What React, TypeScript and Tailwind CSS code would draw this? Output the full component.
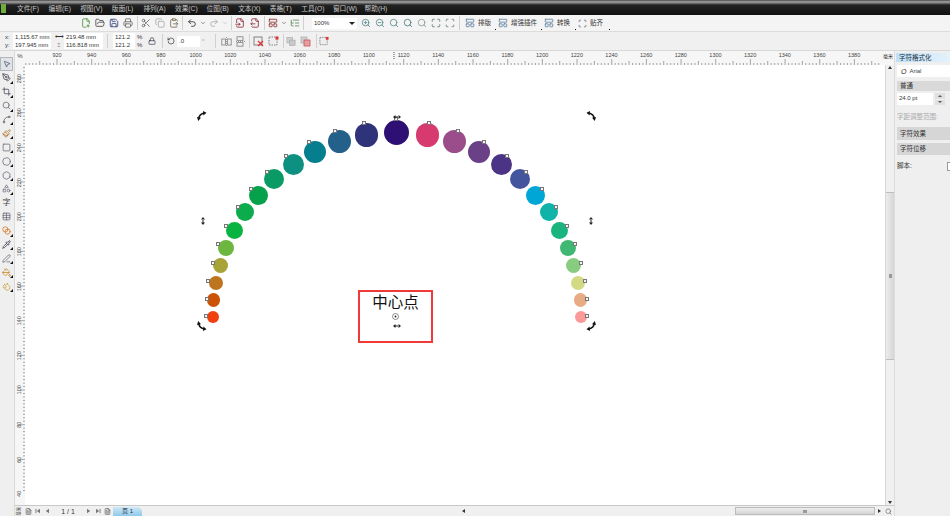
import React from "react";
import {
  FilePlus2, FolderOpen, Save, Printer, Scissors, Copy, ClipboardPaste, Undo2, Redo2, FileInput, FileOutput,
  LayoutPanelTop, ListTree, ZoomIn, ZoomOut, Search, Maximize, Scan, RotateCcw, Lock, MousePointer2, PenTool,
  Crop, Spline, Paintbrush, Square, Circle, Hexagon, Shapes, Table, Blend, Pipette, PenLine, PaintBucket, Droplets,
  ChevronDown, FileText,
} from "lucide-react";

const FONT = "font-['Liberation_Sans','Noto_Sans_CJK_SC',sans-serif]";

type Dot = [number, number, number, string, number, number];
const dots: Dot[] = [
  [212.7, 316.7, 6, "#f04010", 206, 316], [213.3, 300, 6.7, "#cc5206", 206.7, 299], [215.7, 282.7, 7, "#bd7520", 208.3, 281.3],
  [220, 265, 7.5, "#a8a336", 212.7, 263], [226, 247.7, 8, "#6db63f", 218.3, 244.3], [234.3, 230, 8.5, "#09b341", 226.3, 226],
  [245, 212.3, 9, "#0cab4c", 237.7, 207], [258.3, 195.3, 9.5, "#06a24b", 251, 189], [274.3, 179.3, 10, "#0a9a66", 267.3, 171.7],
  [293, 164.7, 10.5, "#0e9081", 286.3, 155.7], [314.7, 152, 11, "#057e8e", 309, 141.7], [339.3, 141.7, 11.3, "#25608a", 335, 130.7],
  [366.7, 135, 11.8, "#2f3379", 364, 122.7], [396.7, 132.3, 12.3, "#2e0f73", 396, 119.3], [427.3, 135, 11.8, "#d63a6e", 429, 122.7],
  [454.7, 141.7, 11.4, "#9a4d8a", 458, 130.7], [479.3, 152, 11, "#6a4087", 484, 141.7], [501, 164.7, 10.5, "#4b3486", 507, 155.7],
  [519.7, 179.3, 10, "#45559d", 526, 171.7], [535.7, 195.3, 9.5, "#00a6d6", 542.3, 189], [548.7, 212.3, 9, "#10b3a8", 555.7, 207],
  [559.3, 230, 8.5, "#1ab57f", 567, 226], [567.7, 247.7, 8, "#40b873", 575, 244.3], [573.7, 265.3, 7.5, "#88cc80", 580.7, 263],
  [578, 282.7, 7, "#d3da85", 585, 281.3], [580.3, 300, 6.7, "#e8ac85", 586.7, 299], [581.3, 316.7, 6, "#fb9a98", 587, 316],
];

const menus = ["文件(F)", "编辑(E)", "视图(V)", "版面(L)", "排列(A)", "效果(C)", "位图(B)", "文本(X)", "表格(T)", "工具(O)", "窗口(W)", "帮助(H)"];
const hLabels = Array.from({ length: 24 }, (_, i) => 920 + i * 20);
const vLabels = Array.from({ length: 13 }, (_, i) => 280 - i * 20);

function Sep() {
  return <div className="mx-[2px] h-[14px] w-px shrink-0 bg-[#d0d0d0]" />;
}

function Gap({ w }: { w: string }) {
  return <div className={`shrink-0 ${w}`} />;
}

function Slot({ children, w = "w-[14px]" }: { children: React.ReactNode; w?: string }) {
  return <div className={`flex h-full shrink-0 items-center justify-center ${w}`}>{children}</div>;
}

function Field({ text, w }: { text: string; w: string }) {
  return <div className={`flex h-[8px] items-center whitespace-nowrap bg-white pl-[2px] text-[6px] leading-none text-[#333] ${w}`}>{text}</div>;
}

function RotHandle({ x, y, flip }: { x: number; y: number; flip: string }) {
  return (
    <svg className={`absolute ${flip}`} style={{ left: x - 30, top: y - 70 }} width="10" height="10" viewBox="0 0 10 10" fill="none">
      <path d="M1.8 7.5 Q2.2 3.2 7 2" stroke="#111" strokeWidth="1.6" />
      <path d="M0 6 L4 6.8 L1.2 10 Z M6 0 L9.5 1.8 L6.4 4.4 Z" fill="#111" />
    </svg>
  );
}

function Horizontal({ x, y }: { x: number; y: number }) {
  return (
    <svg className="absolute" style={{ left: x - 29, top: y - 67 }} width="8" height="4" viewBox="0 0 8 4">
      <path d="M0 2 L2.5 0 V4 Z M8 2 L5.5 0 V4 Z M2 1.5 H6 V2.5 H2 Z" fill="#222" />
    </svg>
  );
}

function Vertical({ x, y }: { x: number; y: number }) {
  return (
    <svg className="absolute" style={{ left: x - 27, top: y - 69 }} width="4" height="8" viewBox="0 0 4 8">
      <path d="M2 0 L0 2.5 H4 Z M2 8 L0 5.5 H4 Z M1.5 2 H2.5 V6 H1.5 Z" fill="#222" />
    </svg>
  );
}

function ToolBtn({ children, active, fly = true }: { children: React.ReactNode; active?: boolean; fly?: boolean }) {
  return (
    <div className={`relative flex h-[13.9px] w-[13px] items-center justify-center ${active ? "border border-[#b5b5b5] bg-[#dfe3ea]" : ""}`}>
      {children}
      {fly && <span className="absolute bottom-[1px] right-0 h-0 w-0 border-b-[3px] border-l-[3px] border-b-[#111] border-l-transparent" />}
    </div>
  );
}

function LabelBtn({ text, w, icon }: { text: string; w: string; icon?: React.ReactNode }) {
  return (
    <div className={`flex h-full shrink-0 items-center ${w}`}>
      {icon ?? <LayoutPanelTop size={10} className="mr-[3px] shrink-0 text-[#5b7f9e]" />}
      <span className="whitespace-nowrap text-[6.5px] text-[#333]">{text}</span>
      <span className="mb-[1px] ml-auto mr-[2px] h-[1.5px] w-[1.5px] self-end bg-[#111]" />
    </div>
  );
}

function Mirror({ vertical }: { vertical?: boolean }) {
  return (
    <svg width="11" height="11" viewBox="0 0 11 11" fill="none" stroke="#8a8a8a" strokeWidth="0.9" className={vertical ? "rotate-90" : ""}>
      <rect x="0.8" y="3" width="3.6" height="6" />
      <rect x="6.6" y="3" width="3.6" height="6" />
      <line x1="5.5" y1="1" x2="5.5" y2="10" strokeDasharray="1 1" />
    </svg>
  );
}

function BoxMark({ dot }: { dot?: boolean }) {
  return (
    <svg width="11" height="11" viewBox="0 0 11 11" fill="none">
      <rect x="1" y="1" width="8" height="8" stroke="#777" strokeWidth="0.9" fill="#eee" strokeDasharray={dot ? "1.5 1" : undefined} />
      {dot ? <rect x="7.5" y="0.5" width="3" height="3" fill="#d33" /> : <path d="M5 5 L10 10 M10 5 L5 10" stroke="#d33" strokeWidth="1.2" />}
    </svg>
  );
}

function Overlap({ red }: { red?: boolean }) {
  return (
    <svg width="11" height="11" viewBox="0 0 11 11">
      <rect x="1" y="1" width="6" height="6" fill="#d0d0d0" stroke="#aaa" strokeWidth="0.7" />
      <rect x="4" y="4" width="6" height="6" fill={red ? "#e2a0a0" : "#c8c8c8"} stroke={red ? "#c44" : "#aaa"} strokeWidth="0.7" />
    </svg>
  );
}

function Nav({ last, next }: { last?: boolean; next?: boolean }) {
  return (
    <svg width="6" height="6" viewBox="0 0 6 6" className={next ? "-scale-x-100" : ""}>
      <path d="M5 0.8 V5.2 L1.8 3 Z" fill="#777" />
      {last && <rect x="0.5" y="0.8" width="0.9" height="4.4" fill="#777" />}
    </svg>
  );
}

export default function App() {
  return (
    <div className={`flex h-[518px] w-[950px] flex-col overflow-hidden bg-white ${FONT}`}>
      {/* title stripe + menu */}
      <div className="h-[15px] shrink-0 bg-[linear-gradient(#4a4a4a_0px,#a8a8a8_2px,#777_3px,#222_5px,#111_100%)]">
        <div className="flex h-full items-end pb-[2px]">
          <div className="ml-[1px] mr-[11px] h-[9px] w-[5px] bg-[#6fae3c]" />
          {menus.map((m) => (
            <div key={m} className="w-[31.6px] shrink-0 whitespace-nowrap text-[6.7px] leading-[9px] text-[#c8c8c8]">{m}</div>
          ))}
        </div>
      </div>

      {/* standard toolbar */}
      <div className="flex h-[17px] shrink-0 items-center border-b border-[#dcdcdc] bg-[#f4f4f4] pl-[79px]">
        <Slot><FilePlus2 size={10} className="text-[#4a8f3c]" /></Slot>
        <Slot><FolderOpen size={10} className="text-[#444]" /></Slot>
        <Slot><Save size={10} className="text-[#33407a]" /></Slot>
        <Slot><Printer size={10} className="text-[#666]" /></Slot>
        <Sep />
        <Slot w="w-[12px]"><Scissors size={10} className="text-[#666]" /></Slot>
        <Slot w="w-[16px]"><Copy size={10} className="text-[#aaa]" /></Slot>
        <Slot w="w-[12px]"><ClipboardPaste size={10} className="text-[#7a6a55]" /></Slot>
        <Sep />
        <Slot><Undo2 size={10} className="text-[#333]" /></Slot>
        <Slot w="w-[8px]"><ChevronDown size={6} className="text-[#333]" /></Slot>
        <Slot><Redo2 size={10} className="text-[#aaa]" /></Slot>
        <Slot w="w-[8px]"><ChevronDown size={6} className="text-[#aaa]" /></Slot>
        <Sep />
        <Slot w="w-[12px]"><FileInput size={10} className="text-[#8a2b3c]" /></Slot>
        <Gap w="w-[2px]" />
        <Slot><FileOutput size={10} className="text-[#8a2b3c]" /></Slot>
        <Sep />
        <Slot w="w-[12px]"><LayoutPanelTop size={10} className="text-[#8a2b2b]" /></Slot>
        <Slot w="w-[10px]"><ChevronDown size={6} className="text-[#333]" /></Slot>
        <Slot w="w-[12px]"><ListTree size={10} className="text-[#5d8a5d]" /></Slot>
        <Sep />
        <Gap w="w-[6px]" />
        <div className="flex h-[11px] w-[45px] shrink-0 items-center justify-between bg-white px-[2px] text-[6px] text-[#333]">
          <span>100%</span>
          <span className="h-0 w-0 border-x-[3px] border-t-[3px] border-x-transparent border-t-[#222]" />
        </div>
        <Gap w="w-[2px]" />
        <Slot><ZoomIn size={10} className="text-[#5c8a8a]" /></Slot>
        <Slot><ZoomOut size={10} className="text-[#5c8a8a]" /></Slot>
        <Slot><Search size={10} className="text-[#5c8a8a]" /></Slot>
        <Slot><Search size={10} className="text-[#4c7a7a]" /></Slot>
        <Slot><Search size={10} className="text-[#8a9a9a]" /></Slot>
        <Slot><Maximize size={10} className="text-[#5c7a7a]" /></Slot>
        <Slot><Scan size={10} className="text-[#5c7a7a]" /></Slot>
        <Sep />
        <Gap w="w-[3px]" />
        <LabelBtn text="排版" w="w-[33px]" />
        <LabelBtn text="增强插件" w="w-[46px]" />
        <LabelBtn text="转换" w="w-[34px]" />
        <LabelBtn text="贴齐" w="w-[34px]" icon={<Scan size={9} className="mr-[3px] shrink-0 text-[#667]" />} />
      </div>

      {/* property bar */}
      <div className="flex h-[19px] shrink-0 items-center border-b border-[#d8d8d8] bg-[#f0f0f0] pl-[5px]">
        <div className="flex w-[8px] flex-col text-[6px] leading-[8px] text-[#333]"><span>x:</span><span>y:</span></div>
        <div className="flex w-[41px] flex-col"><Field text="1,115.67 mm" w="w-[38px]" /><Field text="197.945 mm" w="w-[38px]" /></div>
        <div className="flex w-[10px] flex-col items-center text-[6px] leading-[8px] text-[#333]"><span>⟷</span><span>⌶</span></div>
        <div className="flex w-[41px] flex-col"><Field text="219.48 mm" w="w-[39px]" /><Field text="116.818 mm" w="w-[39px]" /></div>
        <Sep />
        <div className="ml-[3px] flex w-[24px] flex-col"><Field text="121.2" w="w-[22px]" /><Field text="121.2" w="w-[22px]" /></div>
        <div className="flex w-[8px] flex-col text-[6px] leading-[8px] text-[#333]"><span>%</span><span>%</span></div>
        <Slot w="w-[13px]"><Lock size={8} className="text-[#334]" /></Slot>
        <Gap w="w-[2px]" />
        <Sep />
        <Gap w="w-[2px]" />
        <Slot w="w-[8px]"><RotateCcw size={8} className="text-[#333]" /></Slot>
        <div className="ml-[2px] flex h-[11px] w-[23px] shrink-0 items-center bg-white pl-[2px] text-[6px] text-[#333]">.0</div>
        <span className="ml-[2px] w-[11px] shrink-0 text-[6px] text-[#888]">°</span>
        <Sep />
        <Gap w="w-[1px]" />
        <Slot><Mirror /></Slot>
        <Slot><Mirror vertical /></Slot>
        <Sep />
        <Slot w="w-[12px]"><BoxMark /></Slot>
        <Gap w="w-[2px]" />
        <Slot><BoxMark dot /></Slot>
        <Gap w="w-[1px]" />
        <Sep />
        <Slot w="w-[10px]"><Overlap /></Slot>
        <Gap w="w-[2px]" />
        <Slot><Overlap red /></Slot>
        <Gap w="w-[2px]" />
        <Sep />
        <Slot w="w-[10px]"><BoxMark dot /></Slot>
      </div>

      {/* work area */}
      <div className="flex min-h-0 flex-1">
        {/* toolbox */}
        <div className="flex w-[15px] shrink-0 flex-col items-start border-r border-[#dadada] bg-[#efefef] pt-[6px]">
          <ToolBtn active fly={false}><MousePointer2 size={8} className="text-[#445]" /></ToolBtn>
          <ToolBtn><PenTool size={9} className="text-[#445]" /></ToolBtn>
          <ToolBtn><Crop size={9} className="text-[#445]" /></ToolBtn>
          <ToolBtn><Search size={9} className="text-[#667]" /></ToolBtn>
          <ToolBtn><Spline size={9} className="text-[#556]" /></ToolBtn>
          <ToolBtn><Paintbrush size={9} className="text-[#b0702a]" /></ToolBtn>
          <ToolBtn><Square size={9} className="text-[#667]" /></ToolBtn>
          <ToolBtn><Circle size={9} className="text-[#667]" /></ToolBtn>
          <ToolBtn><Hexagon size={9} className="text-[#667]" /></ToolBtn>
          <ToolBtn><Shapes size={9} className="text-[#667]" /></ToolBtn>
          <ToolBtn fly={false}><span className="text-[8px] leading-none text-[#444]">字</span></ToolBtn>
          <ToolBtn fly={false}><Table size={9} className="text-[#667]" /></ToolBtn>
          <ToolBtn><Blend size={9} className="text-[#d8741c]" /></ToolBtn>
          <ToolBtn><Pipette size={9} className="text-[#334]" /></ToolBtn>
          <ToolBtn><PenLine size={9} className="text-[#667]" /></ToolBtn>
          <ToolBtn><PaintBucket size={9} className="text-[#c8801c]" /></ToolBtn>
          <ToolBtn><Droplets size={9} className="text-[#c89a2c]" /></ToolBtn>
        </div>

        {/* centre column */}
        <div className="flex min-w-0 flex-1 flex-col">
          {/* horizontal ruler */}
          <div className="relative flex h-[14px] shrink-0 bg-[#f6f6f6]">
            <div className="w-[10px] shrink-0 pt-[2px] text-center text-[6px] leading-[7px] text-[#444]">%</div>
            <div className="relative min-w-0 flex-1 overflow-hidden">
              <div className="flex pl-[14.67px] pt-[1px]">
                {hLabels.map((n) => (
                  <div key={n} className="w-[34.67px] shrink-0 text-center text-[5.5px] leading-[7px] text-[#444]">{n}</div>
                ))}
              </div>
              <svg className="absolute inset-0" width="855" height="14">
                {Array.from({ length: 250 }, (_, i) => {
                  const x = 32 - 34.67 + i * 3.467;
                  const major = i % 10 === 0;
                  const mid = i % 5 === 0;
                  return <line key={i} x1={x} x2={x} y1={major ? 8 : mid ? 10 : 12} y2={14} stroke="#555" strokeWidth="0.5" />;
                })}
                <line x1="369" x2="369" y1="1" y2="8" stroke="#222" strokeWidth="0.8" strokeDasharray="1 1" />
              </svg>
              <span className="absolute right-[1px] top-[2px] text-[5px] leading-[6px] text-[#222]">毫米</span>
            </div>
          </div>

          <div className="flex min-h-0 flex-1">
            {/* vertical ruler */}
            <div className="relative w-[10px] shrink-0 overflow-hidden bg-[#f6f6f6]">
              <div className="flex flex-col">
                {vLabels.map((n) => (
                  <div key={n} className="flex h-[34.67px] w-[10px] shrink-0 -translate-y-[4px] items-center justify-center">
                    <span className="-rotate-90 text-[5.5px] leading-none text-[#444]">{n}</span>
                  </div>
                ))}
              </div>
              <svg className="absolute inset-0" width="10" height="440">
                {Array.from({ length: 130 }, (_, i) => {
                  const y = 13 - 34.67 + i * 3.467;
                  const major = i % 10 === 0;
                  return <line key={i} x1={major ? 5 : 8} x2={10} y1={y} y2={y} stroke="#555" strokeWidth="0.5" />;
                })}
              </svg>
            </div>

            {/* canvas */}
            <div className="relative min-w-0 flex-1 bg-white">
              {dots.map(([cx, cy, r, c]) => (
                <div key={`${cx}-${cy}`} className="absolute rounded-full" style={{ left: cx - r - 25, top: cy - r - 65, width: r * 2, height: r * 2, backgroundColor: c }} />
              ))}
              {dots.map(([cx, , , , hx, hy]) => (
                <div key={`h${cx}`} className="absolute h-[4px] w-[4px] border border-[#777] bg-[#f4f4f4]" style={{ left: hx - 27, top: hy - 67 }} />
              ))}
              <RotHandle x={202} y={116} flip="" />
              <RotHandle x={591} y={116} flip="-scale-x-100" />
              <RotHandle x={202} y={326} flip="-scale-y-100" />
              <RotHandle x={591} y={326} flip="-scale-100" />
              <Horizontal x={397} y={117} />
              <Vertical x={202.5} y={221} />
              <Vertical x={591} y={221} />
              <Horizontal x={397} y={326} />
              <div className="absolute left-[333px] top-[225px] flex h-[53px] w-[75px] justify-center border-2 border-[#f03a3a] pt-[1px] text-[15.5px] leading-[20px] text-[#111]">
                中心点
              </div>
              <svg className="absolute left-[366.5px] top-[247.5px]" width="7" height="7" viewBox="0 0 7 7" fill="none">
                <circle cx="3.5" cy="3.5" r="3" stroke="#444" strokeWidth="0.6" />
                <circle cx="3.5" cy="3.5" r="0.9" fill="#222" />
              </svg>
            </div>

            {/* vertical scrollbar */}
            <div className="flex w-[9px] shrink-0 flex-col items-center border-l border-[#d8d8d8] bg-[#f0f0f0]">
              <span className="mt-[1px] h-0 w-0 border-x-[2px] border-b-[3px] border-x-transparent border-b-[#333]" />
              <div className="mt-[123px] flex h-[168px] w-full items-center justify-center border-y border-[#bdbdbd] bg-[linear-gradient(90deg,#ececec,#d6d6d6)]">
                <div className="h-[4px] w-[3px] bg-[#999]" />
              </div>
              <div className="flex-1" />
              <span className="mb-[1px] h-0 w-0 border-x-[2px] border-t-[3px] border-x-transparent border-t-[#333]" />
            </div>
          </div>

          {/* status row */}
          <div className="flex h-[11px] shrink-0 items-center border-t border-[#c8c8c8] bg-[#f0f0f0]">
            <div className="flex w-[8px] shrink-0 justify-center"><span className="-rotate-90 whitespace-nowrap text-[4.5px] leading-none text-[#444]">毫米</span></div>
            <Slot w="w-[10px]"><FileText size={7} className="text-[#444]" /></Slot>
            <Slot w="w-[10px]"><Nav last /></Slot>
            <Slot w="w-[8px]"><Nav /></Slot>
            <span className="w-[34px] shrink-0 text-center text-[7px] leading-none text-[#333]">1 / 1</span>
            <Slot w="w-[8px]"><Nav next /></Slot>
            <Slot w="w-[10px]"><Nav last next /></Slot>
            <Slot w="w-[8px]"><FileText size={7} className="text-[#444]" /></Slot>
            <div className="ml-[2px] flex h-[9px] w-[29px] shrink-0 items-center justify-center rounded-tr-[5px] bg-[linear-gradient(#cfe8f7,#8fc8e8)] text-[6px] leading-none text-[#234]">页 1</div>
            <Gap w="w-[320px]" />
            <span className="h-0 w-0 shrink-0 border-y-[2px] border-r-[3px] border-y-transparent border-r-[#333]" />
            <div className="ml-[270px] flex h-[8px] w-[140px] shrink-0 items-center justify-center border border-[#bbb] bg-[linear-gradient(#eee,#d4d4d4)]">
              <div className="h-[3px] w-[4px] bg-[#999]" />
            </div>
            <span className="ml-[3px] h-0 w-0 shrink-0 border-y-[2px] border-l-[3px] border-y-transparent border-l-[#333]" />
            <Search size={7} className="ml-[4px] shrink-0 text-[#556]" />
          </div>
        </div>

        {/* docker */}
        <div className="flex w-[56px] shrink-0 flex-col overflow-hidden border-l border-[#dcdcdc] bg-[#efefef] pl-[2px]">
          <div className="-ml-[1px] mt-[2px] h-[9px] whitespace-nowrap bg-[linear-gradient(90deg,#bfe0f6,#e4f2fb)] pl-[3px] text-[6.5px] leading-[9px] text-[#234]">字符格式化</div>
          <div className="mt-[3px] flex h-[12px] items-center whitespace-nowrap bg-white pl-[4px] text-[6px] text-[#444]">
            <span className="mr-[3px] text-[7px] italic leading-none text-[#222]">O</span>Arial
          </div>
          <div className="mt-[4px] h-[10px] whitespace-nowrap bg-[#d9d9d9] pl-[3px] text-[6.5px] leading-[10px] text-[#333]">普通</div>
          <div className="mt-[2px] flex h-[12px]">
            <div className="w-[36px] bg-white pl-[2px] text-[6px] leading-[10px] text-[#333]">24.0 pt</div>
            <div className="ml-[2px] flex w-[10px] flex-col gap-px">
              <div className="flex h-[5.5px] items-center justify-center bg-[#e0e0e0]"><span className="h-0 w-0 border-x-[2px] border-b-[2px] border-x-transparent border-b-[#555]" /></div>
              <div className="flex h-[5.5px] items-center justify-center bg-[#e0e0e0]"><span className="h-0 w-0 border-x-[2px] border-t-[2px] border-x-transparent border-t-[#555]" /></div>
            </div>
          </div>
          <div className="mt-[7px] whitespace-nowrap text-[6.5px] leading-[9px] text-[#aaa]">字距调整范围:</div>
          <div className="mt-[6px] h-[13px] whitespace-nowrap bg-[#d6d6d6] pl-[3px] text-[6.5px] leading-[13px] text-[#333]">字符效果</div>
          <div className="mt-[3px] h-[12px] whitespace-nowrap bg-[#d6d6d6] pl-[3px] text-[6.5px] leading-[12px] text-[#333]">字符位移</div>
          <div className="mt-[7px] flex h-[9px] items-center justify-between text-[6.5px] leading-none text-[#333]">
            <span>脚本:</span>
            <span className="h-[9px] w-[3px] rounded-l-[1px] border border-r-0 border-[#999] bg-white" />
          </div>
        </div>
      </div>

      <div className="h-[2px] shrink-0 bg-white" />
    </div>
  );
}
